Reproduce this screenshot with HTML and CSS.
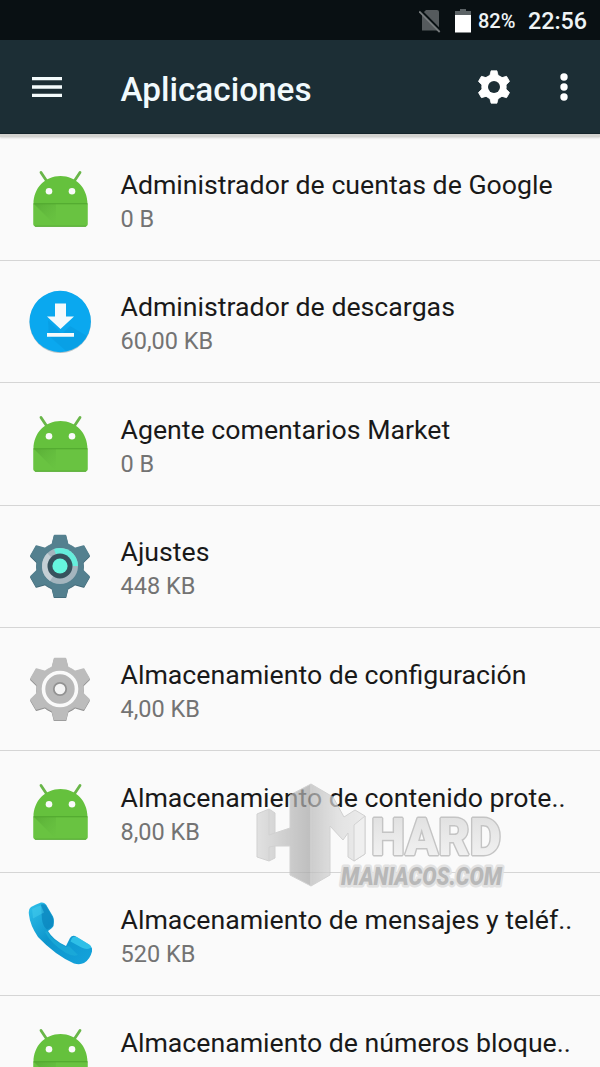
FILE: index.html
```html
<!DOCTYPE html>
<html lang="es">
<head>
<meta charset="utf-8">
<title>Aplicaciones</title>
<link rel="stylesheet" href="styles.css">
</head>
<body>
<svg class="defs" width="0" height="0" aria-hidden="true">
  <defs>
    <linearGradient id="fold" x1="0" y1="0" x2="1" y2="1"><stop offset="0" stop-color="#4b9c2c" stop-opacity=".55"/><stop offset="1" stop-color="#5fb83d" stop-opacity="0"/></linearGradient>
    <linearGradient id="phone" x1="0" y1="0" x2="1" y2="1"><stop offset="0" stop-color="#2fc0ea"/><stop offset=".45" stop-color="#0e95cc"/><stop offset="1" stop-color="#14a3dc"/></linearGradient>
    <linearGradient id="silver" x1="0" y1="0" x2="1" y2="0"><stop offset="0" stop-color="#d8d8d8"/><stop offset="1" stop-color="#a8a8a8"/></linearGradient>
    <linearGradient id="pale" x1="0" y1="0" x2="0" y2="1"><stop offset="0" stop-color="#dedede"/><stop offset="1" stop-color="#f5f5f5"/></linearGradient>
    <linearGradient id="front" x1="0" y1="0" x2="1" y2="0"><stop offset="0" stop-color="#bcbcbc"/><stop offset=".5" stop-color="#dadada"/><stop offset="1" stop-color="#e6e6e6"/></linearGradient>
    <path id="teeth" d="M26.500 1.500h11l2.500 10v41l-2.500 10h-11l-2.500-10v-41z" stroke-width="1.500" stroke-linejoin="round"/>
    <g id="gear"><circle cx="32" cy="32" r="23.300"/><use href="#teeth"/><use href="#teeth" transform="rotate(60 32 32)"/><use href="#teeth" transform="rotate(120 32 32)"/></g>
    <symbol id="bot" viewBox="0 0 64 64">
      <path d="M13 5.500l6 9M52 5.500l-6 9" stroke="#69b649" stroke-width="2.800" stroke-linecap="round"/>
      <path d="M5.500 37C5.500 21 17 9 32.500 9S59.500 21 59.500 37v20a2.500 2.500 0 0 1-2.500 2.500H8a2.500 2.500 0 0 1-2.500-2.500z" fill="#65c13d"/>
      <path d="M5.500 37h54v20a2.500 2.500 0 0 1-2.500 2.500H8a2.500 2.500 0 0 1-2.500-2.500z" fill="#69c341"/>
      <path d="M6 37h22v22z" fill="url(#fold)"/>
      <path d="M5.500 36.700h54" stroke="#4fa52e" stroke-width="1.100"/>
      <path d="M7 59.200h51" stroke="#57a838" stroke-width="1"/>
      <circle cx="21" cy="24.300" r="3.300" fill="#fafafa"/><circle cx="44" cy="24.300" r="3.300" fill="#fafafa"/>
    </symbol>
  </defs>
</svg>
<div class="screen">
  <div class="status">
    <svg class="sim" width="22" height="24" viewBox="0 0 22 24"><path d="M7 1H18q2 0 2 2v18.500H3V5z" fill="#555a5d"/><path d="M1.500 1.500l20 20" stroke="#091013" stroke-width="2.600"/><path d="M.2 2.500l20.500 20.500" stroke="#777b7d" stroke-width="1.800"/></svg>
    <svg class="battery" width="16" height="24" viewBox="0 0 16 24"><path d="M5 0h6v2h5v5H0V2h5z" fill="#5b6265"/><path d="M0 6h16v17.500H0z" fill="#fff"/></svg>
    <span class="percent">82%</span><span class="clock">22:56</span>
  </div>
  <header class="bar">
    <svg class="menu" width="30" height="20" viewBox="0 0 30 20"><path d="M0 1.600h30M0 10h30M0 18.400h30" stroke="#f4fbfc" stroke-width="3.300"/></svg>
    <h1>Aplicaciones</h1>
    <svg class="cog" width="34" height="34" viewBox="0 0 64 64"><use href="#gear" fill="#fff" stroke="#fff"/><circle cx="32" cy="32" r="11.300" fill="#1c2e35"/></svg>
    <svg class="more" width="8" height="28" viewBox="0 0 8 28"><g fill="#fff"><circle cx="4" cy="4" r="3.700"/><circle cx="4" cy="14" r="3.700"/><circle cx="4" cy="24" r="3.700"/></g></svg>
  </header>
  <main class="list">
    <div class="row"><svg class="icon"><use href="#bot"/></svg><div class="info"><p class="name">Administrador de cuentas de Google</p><p class="size">0 B</p></div></div>
    <div class="row">
      <svg class="icon" viewBox="0 0 64 64"><circle cx="32.200" cy="33.300" r="30.800" fill="#b9c5ca"/><circle cx="32.200" cy="32.500" r="30.700" fill="#0aa8ef"/><path d="M20 31l14 14 8-8 17 10A31 31 0 0 1 38 62L21 47z" fill="#078fd0" opacity=".3"/><path d="M27 14.500h11v13h8L32.500 40 19 27.500h8zM19 44h27v3.800H19z" fill="#f4fafc"/></svg>
      <div class="info"><p class="name">Administrador de descargas</p><p class="size">60,00 KB</p></div>
    </div>
    <div class="row"><svg class="icon"><use href="#bot"/></svg><div class="info"><p class="name">Agente comentarios Market</p><p class="size">0 B</p></div></div>
    <div class="row">
      <svg class="icon" viewBox="0 0 64 64"><use href="#gear" y="1" fill="#416877" stroke="#416877"/><use href="#gear" fill="#54808f" stroke="#54808f"/><circle cx="32" cy="32" r="18" fill="#a4b5be"/><path d="M32 32L19.300 19.300A18 18 0 0 0 22 47z" fill="#c4cfd5"/><path d="M32 32L26 15A18 18 0 0 1 50 32z" fill="#65eedc"/><circle cx="32" cy="32" r="12.500" fill="#37525d"/><circle cx="32" cy="32" r="7.600" fill="#66f7df"/></svg>
      <div class="info"><p class="name">Ajustes</p><p class="size">448 KB</p></div>
    </div>
    <div class="row">
      <svg class="icon" viewBox="0 0 64 64"><use href="#gear" y="1.200" fill="#939393" stroke="#939393"/><use href="#gear" fill="#bcbcbc" stroke="#bcbcbc"/><circle cx="32" cy="32" r="16.500" fill="#b8b8b8" stroke="#fafafa" stroke-width="3.600"/><circle cx="32" cy="32" r="6.200" fill="#f4f4f4" stroke="#929292" stroke-width="1.800"/></svg>
      <div class="info"><p class="name">Almacenamiento de configuración</p><p class="size">4,00 KB</p></div>
    </div>
    <div class="row"><svg class="icon"><use href="#bot"/></svg><div class="info"><p class="name">Almacenamiento de contenido prote..</p><p class="size">8,00 KB</p></div></div>
    <div class="row">
      <svg class="icon" viewBox="0 0 64 64"><path d="M3 5Q8 2 13 0.500q3-.5 5 2l7 12q1.500 3 .5 9.500-1 2-5.500 5 5 9 18 15l4-8q2-3 5-2l14 8.500q4 3 3 7-2 8-8 11.500-4 2-10 .5Q27 53 10 35 2 23 1 13 0 7 3 5z" fill="url(#phone)"/><path d="M13 2.500q3-1 5 1l6.500 11.500q1.500 3 .5 8.500-2 2.500-6 4-4-3-5-10z" fill="#0b85bd" opacity=".75"/><path d="M4 7q5-3 9-3.500l3 7-11 6z" fill="#49d0f0" opacity=".45"/><path d="M44 36q2-2.500 5-1l13 8q2 2 .5 3-4 2-9-.5l-11-6z" fill="#36c8ec" opacity=".8"/><path d="M19 29q5 9 19 16l3-1 9 9q-5 2-12-2Q23 42 17 30z" fill="#22b3dc" opacity=".5"/></svg>
      <div class="info"><p class="name">Almacenamiento de mensajes y teléf..</p><p class="size">520 KB</p></div>
    </div>
    <div class="row"><svg class="icon"><use href="#bot"/></svg><div class="info"><p class="name">Almacenamiento de números bloque..</p><p class="size"></p></div></div>
  </main>
  <svg class="watermark" width="290" height="130" viewBox="0 0 290 130" role="img" aria-label="Hard Maniacos">
    <g stroke="#c2c2c2" stroke-width="1" stroke-linejoin="round" opacity=".72">
      <path d="M71 14L50 25V58L35 63V43L29 39 17 44V87L29 91 35 88V76H50V105L71 116z" fill="url(#silver)"/>
      <path d="M29 39v26l6-2M29 91V77l6-1" fill="none"/>
      <path d="M71 14L93 27 104 47 115 40 125 46V84L114 91 108 87V63L103 70 90 56V105L71 116z" fill="url(#front)"/>
      <path d="M114 55V91L125 84V46z" fill="#ececec"/>
    </g>
    <text class="hard" x="131" y="85" textLength="130" lengthAdjust="spacingAndGlyphs">HARD</text>
    <text class="site" x="101" y="115" textLength="161" lengthAdjust="spacingAndGlyphs">MANIACOS.COM</text>
  </svg>
</div>
</body>
</html>
```
FILE: styles.css
```css
* { box-sizing: border-box; }
body { margin: 0; background: #fafafa; font-family: Roboto, "Liberation Sans", sans-serif; }
h1, p { margin: 0; font-weight: 400; white-space: nowrap; }
svg { display: block; flex: none; }
.defs { position: absolute; }
.screen { position: relative; width: 600px; height: 1067px; overflow: hidden; display: flex; flex-direction: column; }
.status { height: 40px; flex: none; background: #091013; color: #eef3f5; display: flex; align-items: center; justify-content: flex-end; padding: 2px 13px 0 0; }
.sim { margin-right: 14px; }
.battery { margin-right: 7px; }
.percent { width: 50px; font-size: 20px; font-weight: 500; white-space: nowrap; }
.clock { font-size: 23.3px; font-weight: 500; width: 59px; white-space: nowrap; }
.bar { height: 94px; flex: none; background: #1c2e35; border-bottom: 1px solid #14232a; box-shadow: 0 3px 1px #d2d2cf, 0 4px 2px #d8d8d8; position: relative; z-index: 1; display: flex; align-items: center; padding: 0 32px; }
.bar h1 { margin: 5px auto 0 58.5px; font-size: 33.3px; font-weight: 500; color: #f1fafd; }
.cog { margin-right: 49px; }
.list { padding-top: 4px; }
.row { height: 122.55px; border-bottom: 1.5px solid #d5d5d5; display: flex; align-items: center; padding-left: 28px; }
.icon { width: 64px; height: 64px; margin-right: 28.5px; }
.info { padding-top: 6px; }
.name { font-size: 26.7px; line-height: 35px; color: #191919; }
.size { min-height: 33px; font-size: 23.5px; line-height: 33px; color: #737373; }
.watermark { position: absolute; left: 240px; top: 770px; }
.hard { font: 900 51px Roboto, "Liberation Sans", sans-serif; fill: url(#pale); stroke: #c4c4c4; stroke-width: 3px; stroke-linejoin: bevel; paint-order: stroke; }
.site { font: italic 900 26px Roboto, "Liberation Sans", sans-serif; fill: #b8b8b8; stroke: #e2e2e2; stroke-width: 5px; stroke-linejoin: round; paint-order: stroke; }
```
